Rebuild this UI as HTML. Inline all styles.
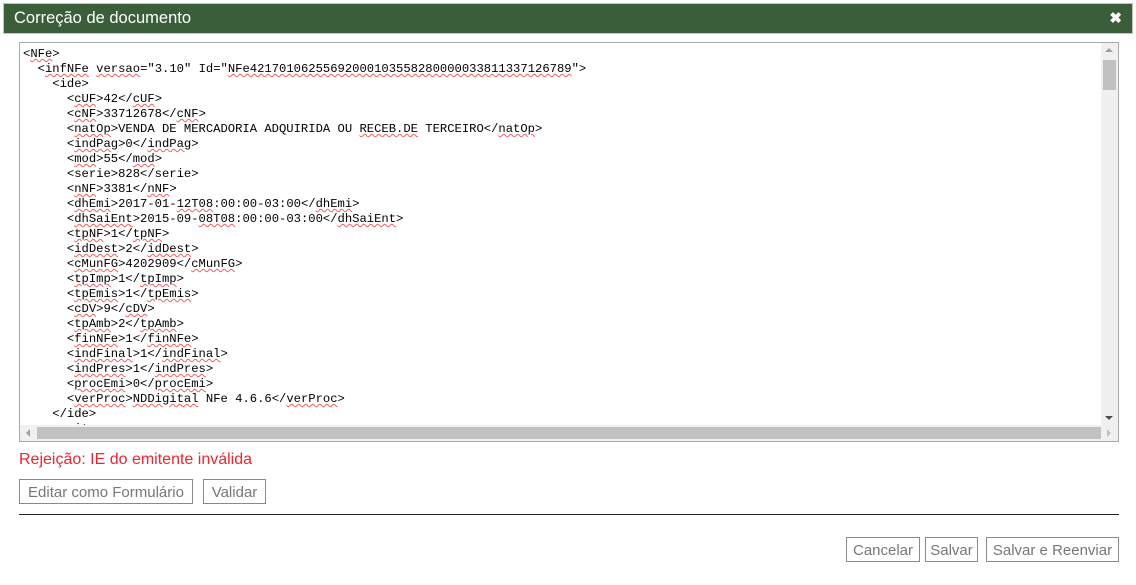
<!DOCTYPE html>
<html><head><meta charset="utf-8"><style>
body{margin:0;width:1136px;height:585px;background:#fff;position:relative;overflow:hidden;font-family:"Liberation Sans",sans-serif;}
.hdr{position:absolute;left:3px;top:3px;width:1128px;height:29px;background:#3b5e3a;border:1px solid #c8c8b8;}
.hdr .t{position:absolute;left:10px;top:5px;color:#fff;font-size:16.5px;}
.hdr .x{position:absolute;right:10px;top:5px;color:#fff;font-size:15px;font-weight:bold;}
.ta{position:absolute;left:19px;top:42px;width:1098px;height:398px;border:1px solid #a9a9a9;overflow:hidden;}
pre{margin:0;position:absolute;left:3px;top:4px;font-family:"Liberation Mono",monospace;font-size:12.2px;line-height:15px;color:#000;}
u{text-decoration:underline wavy #ee6060;text-decoration-thickness:1px;text-underline-offset:1px;}
.vs{position:absolute;right:0;top:0;width:17px;height:383px;background:#f0f0f0;}
.vs .th{position:absolute;left:2px;top:17px;width:13px;height:30px;background:#c1c1c1;}
.hs{position:absolute;left:0;bottom:0;width:1098px;height:16px;background:#f0f0f0;}
.hs .th{position:absolute;left:17px;top:2px;width:1064px;height:12px;background:#c1c1c1;}
.arr{position:absolute;width:0;height:0;}
.err{position:absolute;left:19px;top:451px;color:#f0242e;font-size:16px;}
.btn{position:absolute;height:25px;border:1px solid #8a8a8a;color:#777;font-size:15px;line-height:25px;text-align:center;box-sizing:border-box;white-space:nowrap;}
.sep{position:absolute;left:19px;top:514px;width:1100px;height:1px;background:#222;}
</style></head><body>
<div class="hdr"><span class="t">Correção de documento</span><span class="x">✖</span></div>
<div class="ta">
<pre>&lt;<u>NFe</u>&gt;
  &lt;<u>infNFe</u> <u>versao</u>="3.10" Id="<u>NFe42170106255692000103558280000033811337126789</u>"&gt;
    &lt;ide&gt;
      &lt;<u>cUF</u>&gt;42&lt;/<u>cUF</u>&gt;
      &lt;<u>cNF</u>&gt;33712678&lt;/<u>cNF</u>&gt;
      &lt;<u>natOp</u>&gt;VENDA DE MERCADORIA ADQUIRIDA OU <u>RECEB.DE</u> TERCEIRO&lt;/<u>natOp</u>&gt;
      &lt;<u>indPag</u>&gt;0&lt;/<u>indPag</u>&gt;
      &lt;<u>mod</u>&gt;55&lt;/<u>mod</u>&gt;
      &lt;serie&gt;828&lt;/serie&gt;
      &lt;<u>nNF</u>&gt;3381&lt;/<u>nNF</u>&gt;
      &lt;<u>dhEmi</u>&gt;2017-01-<u>12T08</u>:00:00-03:00&lt;/<u>dhEmi</u>&gt;
      &lt;<u>dhSaiEnt</u>&gt;2015-09-<u>08T08</u>:00:00-03:00&lt;/<u>dhSaiEnt</u>&gt;
      &lt;<u>tpNF</u>&gt;1&lt;/<u>tpNF</u>&gt;
      &lt;<u>idDest</u>&gt;2&lt;/<u>idDest</u>&gt;
      &lt;<u>cMunFG</u>&gt;4202909&lt;/<u>cMunFG</u>&gt;
      &lt;<u>tpImp</u>&gt;1&lt;/<u>tpImp</u>&gt;
      &lt;<u>tpEmis</u>&gt;1&lt;/<u>tpEmis</u>&gt;
      &lt;<u>cDV</u>&gt;9&lt;/<u>cDV</u>&gt;
      &lt;<u>tpAmb</u>&gt;2&lt;/<u>tpAmb</u>&gt;
      &lt;<u>finNFe</u>&gt;1&lt;/<u>finNFe</u>&gt;
      &lt;<u>indFinal</u>&gt;1&lt;/<u>indFinal</u>&gt;
      &lt;<u>indPres</u>&gt;1&lt;/<u>indPres</u>&gt;
      &lt;<u>procEmi</u>&gt;0&lt;/<u>procEmi</u>&gt;
      &lt;<u>verProc</u>&gt;<u>NDDigital</u> NFe 4.6.6&lt;/<u>verProc</u>&gt;
    &lt;/ide&gt;
    &lt;emit&gt;</pre>
<div class="vs"><div class="arr" style="left:4px;top:5px;border-left:4px solid transparent;border-right:4px solid transparent;border-bottom:4px solid #a0a0a0"></div><div class="th"></div><div class="arr" style="left:4px;top:373px;border-left:4px solid transparent;border-right:4px solid transparent;border-top:4px solid #505050"></div></div>
<div class="hs"><div class="arr" style="left:6px;top:4px;border-top:4px solid transparent;border-bottom:4px solid transparent;border-right:4px solid #a0a0a0"></div><div class="th"></div><div class="arr" style="left:1087px;top:4px;border-top:4px solid transparent;border-bottom:4px solid transparent;border-left:4px solid #c0c0c0"></div></div>
</div>
<div class="err">Rejeição: IE do emitente inválida</div>
<div class="btn" style="left:19px;top:479px;width:174px;">Editar como Formulário</div>
<div class="btn" style="left:203px;top:479px;width:63px;">Validar</div>
<div class="sep"></div>
<div class="btn" style="left:846px;top:537px;width:74px;">Cancelar</div>
<div class="btn" style="left:925px;top:537px;width:53px;">Salvar</div>
<div class="btn" style="left:986px;top:537px;width:133px;">Salvar e Reenviar</div>
</body></html>
